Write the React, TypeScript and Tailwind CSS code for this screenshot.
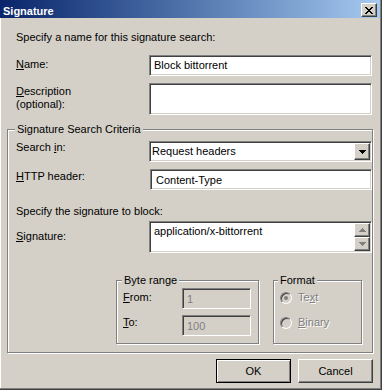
import type { ReactNode } from 'react'

const sunken =
  'border border-t-[#808080] border-l-[#808080] border-r-white border-b-white shadow-[inset_1px_1px_0_#404040,inset_-1px_-1px_0_#d4d0c8]'
const raised =
  'border border-t-white border-l-white border-r-[#404040] border-b-[#404040] shadow-[inset_-1px_-1px_0_#808080]'
const etched =
  'relative border border-[#808080] shadow-[inset_1px_1px_0_#fff,1px_1px_0_#fff]'
const disabledText = 'text-[#808080] [text-shadow:1px_1px_0_#fff]'

const Acc = ({ children }: { children: ReactNode }) => (
  <u className="underline">{children}</u>
)

const GroupBox = ({
  title,
  titleClass,
  className,
  children,
}: {
  title: string
  titleClass: string
  className: string
  children: ReactNode
}) => (
  <div className={`${etched} ${className}`}>
    <span className={`absolute -top-[7px] bg-[#d4d0c8] px-[2px] ${titleClass}`}>
      {title}
    </span>
    {children}
  </div>
)

const Arrow = ({ down, color }: { down?: boolean; color: string }) => (
  <svg width="7" height="4" viewBox="0 0 7 4" className="block">
    <path
      d={down ? 'M0 0h7L3.5 4z' : 'M3.5 0L7 4H0z'}
      fill={color}
      shapeRendering="crispEdges"
    />
  </svg>
)

const Radio = ({ checked }: { checked?: boolean }) => (
  <span className="relative mt-[1px] box-border flex h-[12px] w-[12px] items-center justify-center rounded-full border border-t-[#808080] border-l-[#808080] border-r-white border-b-white bg-[#d4d0c8] shadow-[inset_1px_1px_0_#404040,inset_-1px_-1px_0_#d4d0c8]">
    {checked && <span className="h-[4px] w-[4px] rounded-full bg-[#808080]" />}
  </span>
)

const App = () => {
  return (
    <div className="relative h-[390px] w-[382px] overflow-hidden bg-[#d4d0c8] font-['Tahoma','Liberation_Sans',Arial,sans-serif] text-[11px] leading-[13px] text-black shadow-[inset_-1px_-1px_0_#404040,inset_-2px_-2px_0_#808080,inset_1px_0_0_#fff]">
      <div className="flex h-[18px] w-[380px] items-start justify-between bg-linear-to-r from-[#0a246a] to-[#a6caf0] pl-[3px] pr-[3px] pt-[3px]">
        <span className="mt-[2px] font-bold text-white">Signature</span>
        <button
          className={`${raised} flex h-[14px] w-[16px] items-center justify-center bg-[#d4d0c8]`}
        >
          <svg width="8" height="7" viewBox="0 0 8 7" className="block">
            <path
              d="M0 0h2v1h1v1h2V1h1V0h2v1H7v1H6v1H5v1h1v1h1v1h1v1H6V6H5V5H3v1H2v1H0V6h1V5h1V4h1V3H2V2H1V1H0z"
              fill="#000"
              shapeRendering="crispEdges"
            />
          </svg>
        </button>
      </div>

      <div className="pl-[7px] pr-[9px]">
        <p className="mt-[13px] pl-[9px]">
          Specify a name for this signature search:
        </p>

        <div className="mt-[11px] flex pl-[9px]">
          <label className="mt-[3px] w-[133px]">
            <Acc>N</Acc>ame:
          </label>
          <div className={`${sunken} h-[21px] w-[223px] bg-white pl-[4px] pt-[3px]`}>
            Block bittorrent
          </div>
        </div>

        <div className="mt-[7px] flex pl-[9px]">
          <label className="mt-[2px] w-[133px]">
            <Acc>D</Acc>escription
            <br />
            (optional):
          </label>
          <div className={`${sunken} h-[32px] w-[223px] bg-white`} />
        </div>

        <GroupBox
          title="Signature Search Criteria"
          titleClass="left-[7px]"
          className="mt-[14px] w-[366px] pb-[8px] pl-[8px] pt-[11px]"
        >
          <div className="flex">
            <label className="w-[133px]">
              Search <Acc>i</Acc>n:
            </label>
            <div
              className={`${sunken} flex h-[21px] w-[223px] items-start justify-between bg-white pl-[2px] pr-[1px] pt-[1px]`}
            >
              <span className="mt-[2px]">Request headers</span>
              <span
                className={`${raised} flex h-[17px] w-[16px] items-center justify-center bg-[#d4d0c8]`}
              >
                <Arrow down color="#000" />
              </span>
            </div>
          </div>

          <div className="mt-[7px] flex">
            <label className="mt-[1px] w-[133px]">
              <Acc>H</Acc>TTP header:
            </label>
            <div className={`${sunken} ml-[1px] h-[21px] w-[222px] bg-white pl-[5px] pt-[4px]`}>
              Content-Type
            </div>
          </div>

          <p className="mt-[15px]">Specify the signature to block:</p>

          <div className="mt-[3px] flex">
            <label className="mt-[9px] w-[133px]">
              <Acc>S</Acc>ignature:
            </label>
            <div
              className={`${sunken} flex h-[32px] w-[223px] justify-between bg-white pl-[4px] pr-[1px] pt-[1px]`}
            >
              <span className="mt-[2px]">application/x-bittorrent</span>
              <span className="flex flex-col">
                <span
                  className={`${raised} flex h-[14px] w-[16px] items-center justify-center bg-[#d4d0c8]`}
                >
                  <Arrow color="#808080" />
                </span>
                <span
                  className={`${raised} flex h-[14px] w-[16px] items-center justify-center bg-[#d4d0c8]`}
                >
                  <Arrow down color="#808080" />
                </span>
              </span>
            </div>
          </div>

          <div className="mt-[27px] flex">
            <GroupBox
              title="Byte range"
              titleClass="left-[5px]"
              className="ml-[100px] h-[64px] w-[143px] pl-[6px] pt-[7px]"
            >
              <div className="flex">
                <label className="mt-[3px] w-[59px]">
                  <Acc>F</Acc>rom:
                </label>
                <div
                  className={`${sunken} h-[21px] w-[69px] bg-[#d4d0c8] pl-[4px] pt-[4px] text-[#808080]`}
                >
                  1
                </div>
              </div>
              <div className="mt-[6px] flex">
                <label className="mt-[1px] w-[59px]">
                  <Acc>T</Acc>o:
                </label>
                <div
                  className={`${sunken} h-[21px] w-[69px] bg-[#d4d0c8] pl-[4px] pt-[4px] text-[#808080]`}
                >
                  100
                </div>
              </div>
            </GroupBox>

            <GroupBox
              title="Format"
              titleClass="left-[4px]"
              className="ml-[14px] h-[64px] w-[89px] pl-[6px] pt-[10px]"
            >
              <div className="flex gap-[6px]">
                <Radio checked />
                <span className={disabledText}>
                  Te<Acc>x</Acc>t
                </span>
              </div>
              <div className="mt-[12px] flex gap-[6px]">
                <Radio />
                <span className={disabledText}>
                  <Acc>B</Acc>inary
                </span>
              </div>
            </GroupBox>
          </div>
        </GroupBox>

        <div className="mt-[6px] flex justify-end gap-[7px]">
          <button className="h-[24px] w-[75px] border border-black bg-[#d4d0c8] shadow-[inset_1px_1px_0_#fff,inset_-1px_-1px_0_#808080]">
            OK
          </button>
          <button className={`${raised} h-[24px] w-[75px] bg-[#d4d0c8]`}>
            Cancel
          </button>
        </div>
      </div>
    </div>
  )
}

export default App
